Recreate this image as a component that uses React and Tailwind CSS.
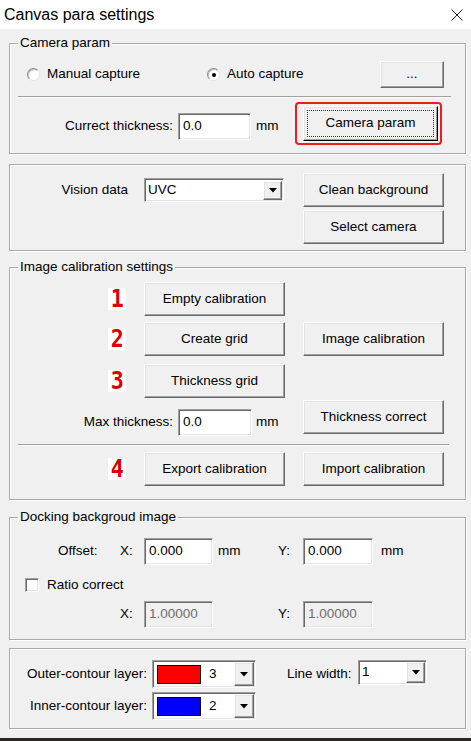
import React from "react";

const font = { fontFamily: '"Liberation Sans", Arial, sans-serif' };

const raised =
  "bg-[#f0f0f0] border border-t-white border-l-white border-r-[#696969] border-b-[#696969] shadow-[inset_-1px_-1px_0_#a0a0a0,inset_1px_1px_0_#e3e3e3]";
const sunken =
  "border border-t-[#a0a0a0] border-l-[#a0a0a0] border-r-white border-b-white shadow-[inset_1px_1px_0_#696969,inset_-1px_-1px_0_#e3e3e3]";
const etched = "border border-[#a9a9a9] shadow-[inset_1px_1px_0_#ffffff,1px_1px_0_#ffffff]";

function Btn({ children, className = "", focus = false }) {
  return (
    <div className={`relative flex items-center justify-center text-[13.5px] text-black ${raised} ${className}`}>
      {focus && <div className="absolute inset-[3px] border border-dotted border-[#333]" />}
      {children}
    </div>
  );
}

function Input({ value, className = "", disabled = false }) {
  return (
    <div
      className={`flex items-center pl-[4px] text-[13.5px] ${sunken} ${
        disabled ? "bg-[#f0f0f0] text-[#6d6d6d]" : "bg-white text-black"
      } ${className}`}
    >
      {value}
    </div>
  );
}

function Arrow({ className = "" }) {
  return (
    <div className={`flex items-center justify-center ${raised} ${className}`}>
      <svg width="8" height="5" viewBox="0 0 8 5">
        <polygon points="0,0 8,0 4,4.5" fill="#000" />
      </svg>
    </div>
  );
}

function Radio({ checked, label }) {
  return (
    <div className="flex items-center">
      <div className="w-[13px] h-[13px] rounded-full border border-t-[#8a8a8a] border-l-[#8a8a8a] border-r-[#e3e3e3] border-b-[#e3e3e3] bg-white flex items-center justify-center shadow-[inset_1px_1px_0_#c0c0c0]">
        {checked && <div className="w-[4px] h-[4px] rounded-full bg-black" />}
      </div>
      <span className="ml-[7px] text-[13.5px]">{label}</span>
    </div>
  );
}

function Digit({ n }) {
  return (
    <div className="w-[18px] h-[22px] bg-white flex items-center justify-center">
      <span
        className="text-[#dd0000] font-bold text-[24px] leading-none scale-x-90"
        style={{ fontFamily: '"DejaVu Sans Mono", monospace' }}
      >
        {n}
      </span>
    </div>
  );
}

function Legend({ children }) {
  return (
    <div className="absolute left-[8px] -top-[9px] px-[2px] bg-[#f0f0f0] text-[13.5px] leading-[16px]">
      {children}
    </div>
  );
}

function Separator({ className = "" }) {
  return <div className={`h-[2px] border-t border-[#a0a0a0] border-b border-b-white ${className}`} />;
}

export default function App() {
  return (
    <div className="w-[471px] h-[741px] bg-[#f0f0f0] flex flex-col text-black" style={font}>
      {/* title bar */}
      <div className="h-[29px] bg-white flex items-center justify-between pl-[4px] pr-[8px]">
        <span className="text-[16px]">Canvas para settings</span>
        <svg width="12" height="12" viewBox="0 0 12 12">
          <path d="M0.5 0.5 L11.5 11.5 M11.5 0.5 L0.5 11.5" stroke="#222" strokeWidth="1" />
        </svg>
      </div>

      {/* Camera param */}
      <div className={`relative mt-[14px] ml-[9px] w-[457px] h-[111px] ${etched}`}>
        <Legend>Camera param</Legend>
        <div className="flex items-center h-[27px] mt-[17px]">
          <div className="w-[197px] pl-[17px]">
            <Radio label="Manual capture" />
          </div>
          <div className="w-[173px]">
            <Radio checked label="Auto capture" />
          </div>
          <Btn className="w-[64px] h-[27px]">...</Btn>
        </div>
        <Separator className="mt-[8px] ml-[8px] w-[433px]" />
        <div className="flex mt-[4px]">
          <div className="flex items-center h-[27px] mt-[11px]">
            <div className="w-[168px] text-right pr-[5px] text-[13.5px]">Currect thickness:</div>
            <Input value="0.0" className="w-[73px] h-[27px]" />
            <div className="w-[44px] pl-[5px] text-[13.5px]">mm</div>
          </div>
          <div className="w-[147px] h-[43px] border-[2px] border-[#e8201c] rounded-[4px] pl-[6px] pt-[2px]">
            <Btn focus className="w-[135px] h-[35px] border-r-black border-b-black">
              Camera param
            </Btn>
          </div>
        </div>
      </div>

      {/* Vision data */}
      <div className={`mt-[10px] ml-[9px] w-[457px] h-[87px] ${etched}`}>
        <div className="flex pt-[8px]">
          <div className="flex items-center h-[24px] mt-[5px] w-[293px]">
            <div className="w-[134px] text-right pr-[16px] text-[13.5px]">Vision data</div>
            <div className={`relative w-[140px] h-[24px] bg-white flex items-center ${sunken}`}>
              <span className="pl-[3px] text-[13.5px]">UVC</span>
              <Arrow className="absolute right-[1px] top-[2px] w-[19px] h-[19px]" />
            </div>
          </div>
          <div className="flex flex-col gap-[3px]">
            <Btn className="w-[141px] h-[34px]">Clean background</Btn>
            <Btn className="w-[141px] h-[34px]">Select camera</Btn>
          </div>
        </div>
      </div>

      {/* Image calibration settings */}
      <div className={`relative mt-[16px] ml-[9px] w-[457px] h-[233px] ${etched}`}>
        <Legend>Image calibration settings</Legend>
        <div className="flex items-center mt-[14px]">
          <div className="w-[134px] flex justify-end pr-[18px]">
            <Digit n="1" />
          </div>
          <Btn className="w-[141px] h-[34px]">Empty calibration</Btn>
        </div>
        <div className="flex items-center mt-[6px]">
          <div className="w-[134px] flex justify-end pr-[18px]">
            <Digit n="2" />
          </div>
          <Btn className="w-[141px] h-[34px]">Create grid</Btn>
          <Btn className="ml-[18px] w-[141px] h-[34px]">Image calibration</Btn>
        </div>
        <div className="flex items-center mt-[8px]">
          <div className="w-[134px] flex justify-end pr-[18px]">
            <Digit n="3" />
          </div>
          <Btn className="w-[141px] h-[34px]">Thickness grid</Btn>
        </div>
        <div className="flex mt-[2px]">
          <div className="flex items-center h-[27px] mt-[9px]">
            <div className="w-[168px] text-right pr-[5px] text-[13.5px]">Max thickness:</div>
            <Input value="0.0" className="w-[74px] h-[27px]" />
            <div className="w-[51px] pl-[4px] text-[13.5px]">mm</div>
          </div>
          <Btn className="w-[141px] h-[34px]">Thickness correct</Btn>
        </div>
        <Separator className="mt-[8px] ml-[8px] w-[431px]" />
        <div className="flex items-center mt-[6px]">
          <div className="w-[134px] flex justify-end pr-[18px]">
            <Digit n="4" />
          </div>
          <Btn className="w-[141px] h-[34px]">Export calibration</Btn>
          <Btn className="ml-[18px] w-[141px] h-[34px]">Import calibration</Btn>
        </div>
      </div>

      {/* Docking background image */}
      <div className={`relative mt-[17px] ml-[9px] w-[457px] h-[123px] ${etched}`}>
        <Legend>Docking backgroud image</Legend>
        <div className="flex items-center h-[27px] mt-[20px] text-[13.5px]">
          <div className="w-[110px] pl-[48px]">Offset:</div>
          <div className="w-[24px]">X:</div>
          <Input value="0.000" className="w-[69px] h-[27px]" />
          <div className="w-[65px] pl-[5px]">mm</div>
          <div className="w-[25px]">Y:</div>
          <Input value="0.000" className="w-[70px] h-[27px]" />
          <div className="pl-[8px]">mm</div>
        </div>
        <div className="flex items-center h-[14px] mt-[13px] pl-[15px]">
          <div className={`w-[14px] h-[14px] bg-white ${sunken}`} />
          <span className="ml-[8px] text-[13.5px]">Ratio correct</span>
        </div>
        <div className="flex items-center h-[27px] mt-[9px] text-[13.5px]">
          <div className="w-[110px]" />
          <div className="w-[24px]">X:</div>
          <Input disabled value="1.00000" className="w-[69px] h-[27px]" />
          <div className="w-[65px]" />
          <div className="w-[25px]">Y:</div>
          <Input disabled value="1.00000" className="w-[70px] h-[27px]" />
        </div>
      </div>

      {/* Layers */}
      <div className={`mt-[8px] ml-[9px] w-[457px] h-[81px] ${etched}`}>
        <div className="flex items-center h-[28px] mt-[11px] text-[13.5px]">
          <div className="w-[142px] text-right pr-[5px]">Outer-contour layer:</div>
          <div className={`relative w-[104px] h-[28px] bg-white flex items-center ${sunken}`}>
            <div className="ml-[4px] w-[44px] h-[19px] bg-[#ff0000] border border-black" />
            <span className="ml-[8px]">3</span>
            <Arrow className="absolute right-[1px] top-[1px] w-[20px] h-[24px]" />
          </div>
          <div className="ml-[31px] w-[71px]">Line width:</div>
          <div className={`relative w-[69px] h-[25px] bg-white flex items-center self-start ${sunken}`}>
            <span className="pl-[3px]">1</span>
            <Arrow className="absolute right-[1px] top-[1px] w-[19px] h-[21px]" />
          </div>
        </div>
        <div className="flex items-center h-[28px] mt-[4px] text-[13.5px]">
          <div className="w-[142px] text-right pr-[5px]">Inner-contour layer:</div>
          <div className={`relative w-[104px] h-[28px] bg-white flex items-center ${sunken}`}>
            <div className="ml-[4px] w-[44px] h-[19px] bg-[#0000ff] border border-black" />
            <span className="ml-[8px]">2</span>
            <Arrow className="absolute right-[1px] top-[1px] w-[20px] h-[24px]" />
          </div>
        </div>
      </div>

      <div className="mt-auto h-[3px] bg-[#2d2620]" />
    </div>
  );
}
